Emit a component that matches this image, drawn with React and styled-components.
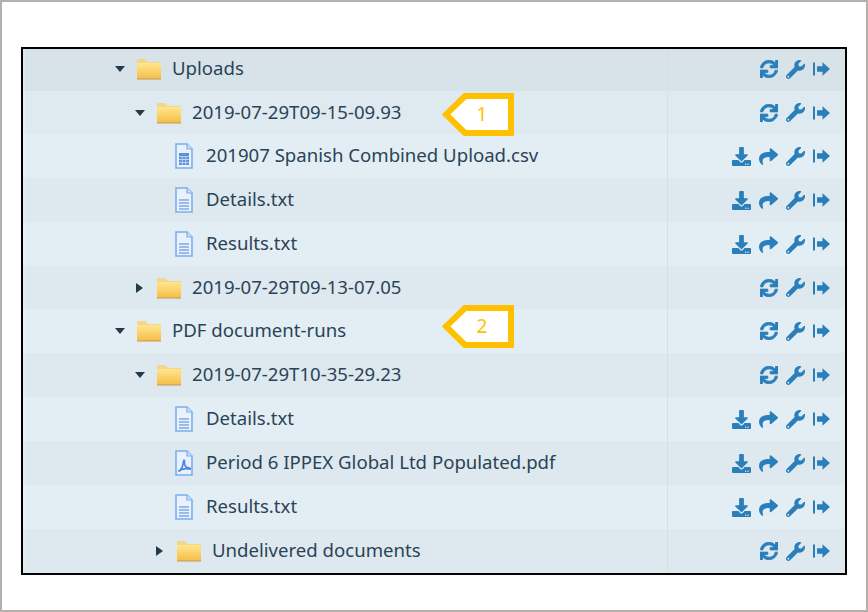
import React from 'react';
import styled, { createGlobalStyle } from 'styled-components';
import { FaSync, FaWrench, FaShare, FaDownload } from 'react-icons/fa';

const Global = createGlobalStyle`
  html, body {
    margin: 0;
    padding: 0;
    background: #fff;
  }
`;

const Page = styled.div`
  box-sizing: border-box;
  width: 868px;
  height: 612px;
  border: 2px solid #b3b0b0;
  padding: 45px 19px 35px 19px;
  font-family: 'Noto Sans', 'Open Sans', sans-serif;
`;

const Frame = styled.div`
  position: relative;
  box-sizing: border-box;
  width: 826px;
  height: 528px;
  border: 2px solid #000;
  display: grid;
  grid-template-rows: 42px 43px 44px 44px 44px 43px repeat(6, 44px);
`;

const tones = {
  top: '#d8e3e9',
  mid: '#deeaf0',
  light: '#e2eef4',
  dark: '#dde9ee'
};

const Row = styled.div`
  display: flex;
  align-items: center;
  background: ${p => tones[p.$tone]};
  box-shadow: inset 2px 0 0 rgba(255, 255, 255, 0.2);
`;

const NameCell = styled.div`
  flex: 0 0 645px;
  height: 100%;
  box-sizing: border-box;
  display: flex;
  align-items: center;
  padding-left: ${p => p.$indent}px;
  padding-bottom: ${p => (p.$top ? 2 : 0)}px;
  border-right: 1px solid #d5e0e5;
`;

const Caret = styled.span`
  width: 0;
  height: 0;
  flex: none;
  margin-right: ${p => (p.$open ? 11 : 13)}px;
  border-style: solid;
  border-color: transparent;
  ${p =>
    p.$open
      ? `border-width: 6px 5px 0 5px; border-top-color: #1f3b4d;`
      : `border-width: 5px 0 5px 7px; border-left-color: #1f3b4d; margin-left: 1px;`}
`;

const Label = styled.span`
  color: #2b4356;
  font-size: 18.6px;
  line-height: 24px;
  margin-left: ${p => p.$gap}px;
  margin-bottom: 2px;
  white-space: nowrap;
`;

const ActionCell = styled.div`
  flex: 1;
  display: flex;
  justify-content: flex-end;
  align-items: center;
  gap: 8px;
  padding-right: 15px;
  padding-bottom: ${p => (p.$top ? 2 : 0)}px;
  color: #2a7fba;
  font-size: 18px;
`;

const Tag = styled.div`
  position: absolute;
  left: ${p => p.$x}px;
  top: ${p => p.$y}px;
  width: 72px;
  height: 43px;
  display: flex;
  align-items: center;
  justify-content: center;
  padding-left: 8px;
  box-sizing: border-box;
`;

const TagShape = styled.svg`
  position: absolute;
  inset: 0;
`;

const TagText = styled.span`
  position: relative;
  color: #ffc000;
  font-size: 19px;
  line-height: 1;
`;

const FolderIcon = () => (
  <svg width="26" height="22" viewBox="0 0 26 22">
    <defs>
      <linearGradient id="fold" x1="0" y1="0" x2="0" y2="1">
        <stop offset="0" stopColor="#ffe68f" />
        <stop offset="1" stopColor="#f6bd45" />
      </linearGradient>
    </defs>
    <path d="M1 1h8l3 3h13v17H1z" fill="#f2d68c" />
    <rect x="1" y="5" width="24" height="16" fill="url(#fold)" />
    <rect x="1" y="20.500" width="24" height="1" fill="#c39a55" />
  </svg>
);

const FileIcon = ({ kind }) => (
  <svg width="18" height="26" viewBox="0 0 18 26">
    <path d="M1 1h11l5 5v19H1z" fill="#e9f2fc" stroke="#7aaef0" strokeWidth="1.6" />
    <path d="M12 1v5h5" fill="#cfe2fa" stroke="#7aaef0" strokeWidth="1.2" />
    {kind === 'txt' && (
      <path d="M4 13h10M4 16h10M4 19h10M4 22h10" stroke="#7fa9e4" strokeWidth="1.6" />
    )}
    {kind === 'csv' && (
      <>
        <rect x="4" y="10" width="10" height="12" fill="#5a90dc" />
        <path d="M4 13.500h10M4 16.500h10M4 19.500h10M7.300 13.500V22M10.700 13.500V22" stroke="#cfe0f7" strokeWidth="0.8" />
      </>
    )}
    {kind === 'pdf' && (
      <path
        d="M3.500 21.500c2.500-1.500 4.500-5 5-10 .2-2 1.400-1.500 1 .5-.6 3 1 5.500 5 6 1.500.2 1 1.300-.5 1-3.500-.7-7.500-.5-10.500 2.500z"
        fill="none"
        stroke="#4a87df"
        strokeWidth="1.7"
      />
    )}
  </svg>
);

const ExitIcon = () => (
  <svg width="17" height="14" viewBox="0 0 17 14" fill="currentColor">
    <rect x="0" y="0.500" width="2" height="13" />
    <path d="M4 4.300h5.500V0.300L17 7l-7.500 6.700V9.700H4z" />
  </svg>
);

const FolderActions = ({ top }) => (
  <ActionCell $top={top}>
    <FaSync size={18} stroke="currentColor" strokeWidth={24} />
    <FaWrench size={19} />
    <ExitIcon />
  </ActionCell>
);

const FileActions = () => (
  <ActionCell>
    <FaDownload size={19} />
    <FaShare size={19} />
    <FaWrench size={19} />
    <ExitIcon />
  </ActionCell>
);

const rows = [
  { name: 'Uploads', indent: 92, folder: true, open: true, tone: 'top' },
  { name: '2019-07-29T09-15-09.93', indent: 112, folder: true, open: true, tone: 'mid' },
  { name: '201907 Spanish Combined Upload.csv', indent: 152, kind: 'csv', tone: 'light' },
  { name: 'Details.txt', indent: 152, kind: 'txt', tone: 'dark' },
  { name: 'Results.txt', indent: 152, kind: 'txt', tone: 'light' },
  { name: '2019-07-29T09-13-07.05', indent: 112, folder: true, tone: 'dark' },
  { name: 'PDF document-runs', indent: 92, folder: true, open: true, tone: 'light' },
  { name: '2019-07-29T10-35-29.23', indent: 112, folder: true, open: true, tone: 'dark' },
  { name: 'Details.txt', indent: 152, kind: 'txt', tone: 'light' },
  { name: 'Period 6 IPPEX Global Ltd Populated.pdf', indent: 152, kind: 'pdf', tone: 'dark' },
  { name: 'Results.txt', indent: 152, kind: 'txt', tone: 'light' },
  { name: 'Undelivered documents', indent: 132, folder: true, tone: 'dark' }
];

const Callout = ({ x, y, text }) => (
  <Tag $x={x} $y={y}>
    <TagShape width="72" height="43" viewBox="0 0 72 43">
      <path d="M23 3H69V40H23L4 21.500z" fill="#fff" stroke="#ffc000" strokeWidth="6" />
    </TagShape>
    <TagText>{text}</TagText>
  </Tag>
);

export default function App() {
  return (
    <Page>
      <Global />
      <Frame>
        {rows.map((row, i) => (
          <Row key={i} $tone={row.tone}>
            <NameCell $indent={row.indent} $top={i === 0}>
              {row.folder ? (
                <>
                  <Caret $open={row.open} />
                  <FolderIcon />
                  <Label $gap={10}>{row.name}</Label>
                </>
              ) : (
                <>
                  <FileIcon kind={row.kind} />
                  <Label $gap={13}>{row.name}</Label>
                </>
              )}
            </NameCell>
            {row.folder ? <FolderActions top={i === 0} /> : <FileActions />}
          </Row>
        ))}
        <Callout x={419} y={44} text="1" />
        <Callout x={419} y={256} text="2" />
      </Frame>
    </Page>
  );
}
